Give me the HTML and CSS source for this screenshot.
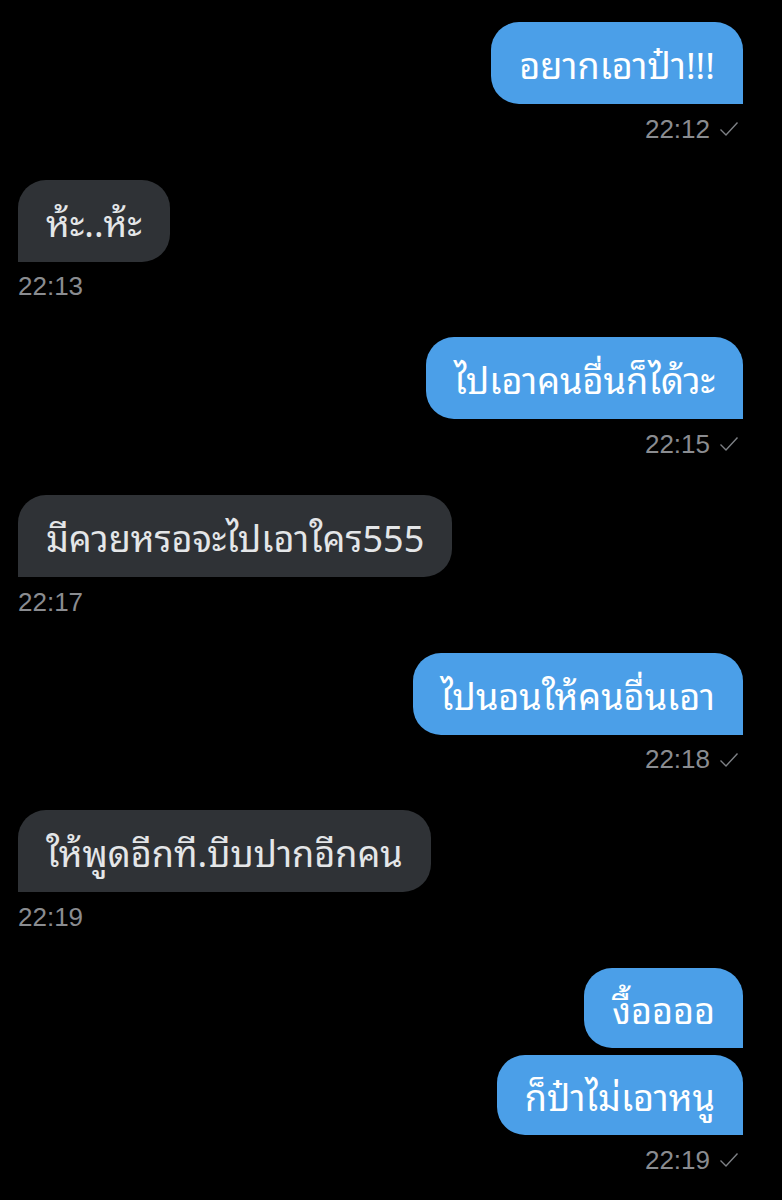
FILE: index.html
```html
<!DOCTYPE html>
<html lang="th">
<head>
  <meta charset="UTF-8" />
  <meta name="viewport" content="width=device-width, initial-scale=1.0"/>
  <title>Messages</title>
  <link rel="stylesheet" href="styles.css">
</head>
<body>

<div class="chat">

  <div class="msg sent">
    <div class="bubble">อยากเอาป๋า!!!</div>
    <div class="time">22:12 <svg class="tick" viewBox="0 0 20 16"><path d="M1.5 8.5l5.5 5.5L18.5 1.5"/></svg></div>
  </div>

  <div class="msg recv">
    <div class="bubble">ห้ะ..ห้ะ</div>
    <div class="time">22:13</div>
  </div>

  <div class="msg sent">
    <div class="bubble">ไปเอาคนอื่นก็ได้วะ</div>
    <div class="time">22:15 <svg class="tick" viewBox="0 0 20 16"><path d="M1.5 8.5l5.5 5.5L18.5 1.5"/></svg></div>
  </div>

  <div class="msg recv">
    <div class="bubble">มีควยหรอจะไปเอาใคร555</div>
    <div class="time">22:17</div>
  </div>

  <div class="msg sent">
    <div class="bubble">ไปนอนให้คนอื่นเอา</div>
    <div class="time">22:18 <svg class="tick" viewBox="0 0 20 16"><path d="M1.5 8.5l5.5 5.5L18.5 1.5"/></svg></div>
  </div>

  <div class="msg recv">
    <div class="bubble">ให้พูดอีกที.บีบปากอีกคน</div>
    <div class="time">22:19</div>
  </div>

  <div class="msg sent group">
    <div class="bubble">งื้ออออ</div>
    <div class="bubble">ก็ป๋าไม่เอาหนู</div>
    <div class="time">22:19 <svg class="tick" viewBox="0 0 20 16"><path d="M1.5 8.5l5.5 5.5L18.5 1.5"/></svg></div>
  </div>

</div>

</body>
</html>
```

FILE: styles.css
```css
body {
  margin: 0;
  padding: 0;
  background: #000;
  font-family: "Noto Sans Thai Looped", "Noto Sans", "Liberation Sans", sans-serif;
}
.chat {
  padding: 22px 39px 0 18px;
  display: flex;
  flex-direction: column;
}
.msg {
  display: flex;
  flex-direction: column;
  gap: 7px;
  margin-bottom: 35.7px;
}
.msg.sent {
  align-items: flex-end;
}
.msg.recv {
  align-items: flex-start;
}
.bubble {
  box-sizing: border-box;
  height: 82px;
  padding: 0 28px;
  display: flex;
  align-items: center;
  font-size: 36px;
  border-radius: 28px;
  white-space: nowrap;
}
.group .bubble {
  height: 80px;
}
.sent .bubble {
  background: #4b9fe8;
  color: #fff;
  border-bottom-right-radius: 0;
}
.recv .bubble {
  background: #2f3236;
  color: #e4e6e8;
  border-bottom-left-radius: 0;
}
.time {
  display: flex;
  align-items: center;
  gap: 9px;
  margin-top: 3px;
  height: 30px;
  font-family: "Liberation Sans", Arial, sans-serif;
  font-size: 26px;
  color: #8a8c90;
}
.tick {
  width: 20px;
  height: 16px;
  margin-right: 4px;
}
.tick path {
  fill: none;
  stroke: #7d8085;
  stroke-width: 1.4;
}
```
